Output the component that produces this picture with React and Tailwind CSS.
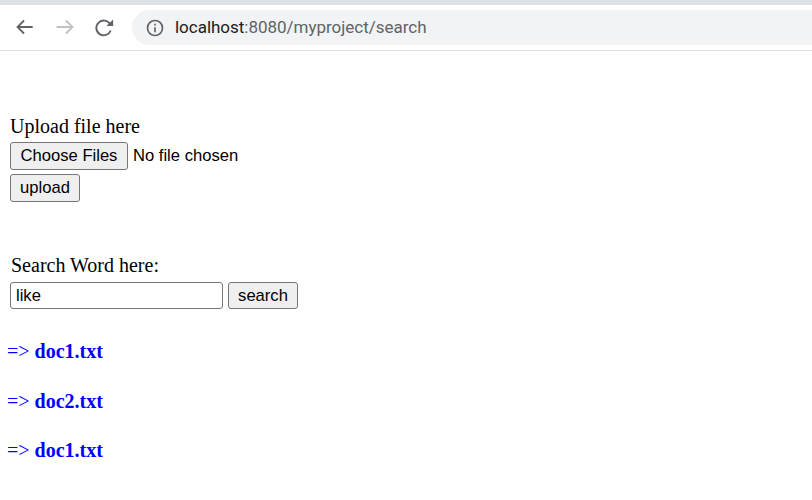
import React from "react";

const serif = "font-['Liberation_Serif',serif]";
const sans = "font-['Liberation_Sans',Arial,sans-serif]";
const btn = `border border-[#767676] rounded-[3px] bg-[#efefef] text-[16.6px] leading-none text-black ${sans}`;

function Chrome() {
  return (
    <div className="h-[51px] bg-white border-b border-[#dadce0]">
      <div className="h-[5px] bg-[#dee1e6]" />
      <div className="h-[45px] flex items-center">
        <svg width="20" height="20" viewBox="0 0 20 20" className="ml-[15px] mt-[1px]" fill="none" stroke="#5f6368" strokeWidth="1.8">
          <path d="M17.7 9H2.8M9 2.5L2.5 9 9 15.5" />
        </svg>
        <svg width="20" height="20" viewBox="0 0 20 20" className="ml-[20px] mt-[1px]" fill="none" stroke="#bdc1c6" strokeWidth="1.8">
          <path d="M1.6 9h15M11 2.5L17.5 9 11 15.5" />
        </svg>
        <svg width="20" height="20" viewBox="0 0 20 20" className="ml-[20px]" fill="none" stroke="#5f6368" strokeWidth="1.9">
          <g transform="translate(-0.5 -0.5)">
            <path d="M16.2 13a7.4 7.4 0 1 1-.6-6.4" />
            <path d="M18.6 1.9v6.7h-6.7z" fill="#5f6368" stroke="none" />
          </g>
        </svg>
        <div className="ml-[17px] flex-1 h-[35px] rounded-l-[18px] bg-[#f1f3f4] flex items-center font-['Roboto',sans-serif]">
          <svg width="20" height="20" viewBox="0 0 24 24" className="ml-[13px]" fill="#5f6368">
            <path d="M11 7h2v2h-2zm0 4h2v6h-2zm1-9a10 10 0 1 0 0 20 10 10 0 0 0 0-20zm0 18a8 8 0 1 1 0-16 8 8 0 0 1 0 16z" />
          </svg>
          <span className="ml-[10px] text-[17px] text-[#5f6368] leading-none tracking-[-0.02px]">
            <span className="text-[#202124]">localhost</span>:8080/myproject/search
          </span>
        </div>
      </div>
    </div>
  );
}

export default function App() {
  return (
    <div className="w-[812px] h-[500px] bg-white overflow-hidden">
      <Chrome />
      <div className="pl-[10px] pt-[64px]">
        <div className={`text-[20px] leading-[22px] text-black ${serif}`}>Upload file here</div>
        <div className="mt-[5px] flex items-center h-[28px]">
          <button className={`${btn} h-[28px] w-[118px]`}>Choose Files</button>
          <span className={`ml-[5px] text-[16.6px] text-black ${sans}`}>No file chosen</span>
        </div>
        <button className={`${btn} h-[28px] w-[70px] mt-[4px] block`}>upload</button>
        <div className={`mt-[52px] text-[20px] leading-[22px] text-black ${serif}`}>
          <span className="ml-[1px]">Search Word here:</span>
        </div>
        <div className="mt-[6px] flex items-center">
          <input
            readOnly
            value="like"
            className={`w-[213px] h-[27px] border border-[#767676] rounded-[3px] bg-white px-[5px] text-[16.6px] text-black ${sans}`}
          />
          <button className={`${btn} h-[27px] pt-[1px] w-[70px] ml-[5px]`}>search</button>
        </div>
      </div>
      <div className={`pl-[7px] mt-[31px] flex flex-col gap-[27.5px] text-[20px] leading-[22px] font-bold text-[#0000ff] ${serif}`}>
        <div><span className="font-normal text-[#0000ff]">=&gt;</span> doc1.txt</div>
        <div><span className="font-normal text-[#0000ff]">=&gt;</span> doc2.txt</div>
        <div><span className="font-normal text-[#0000ff]">=&gt;</span> doc1.txt</div>
      </div>
    </div>
  );
}
